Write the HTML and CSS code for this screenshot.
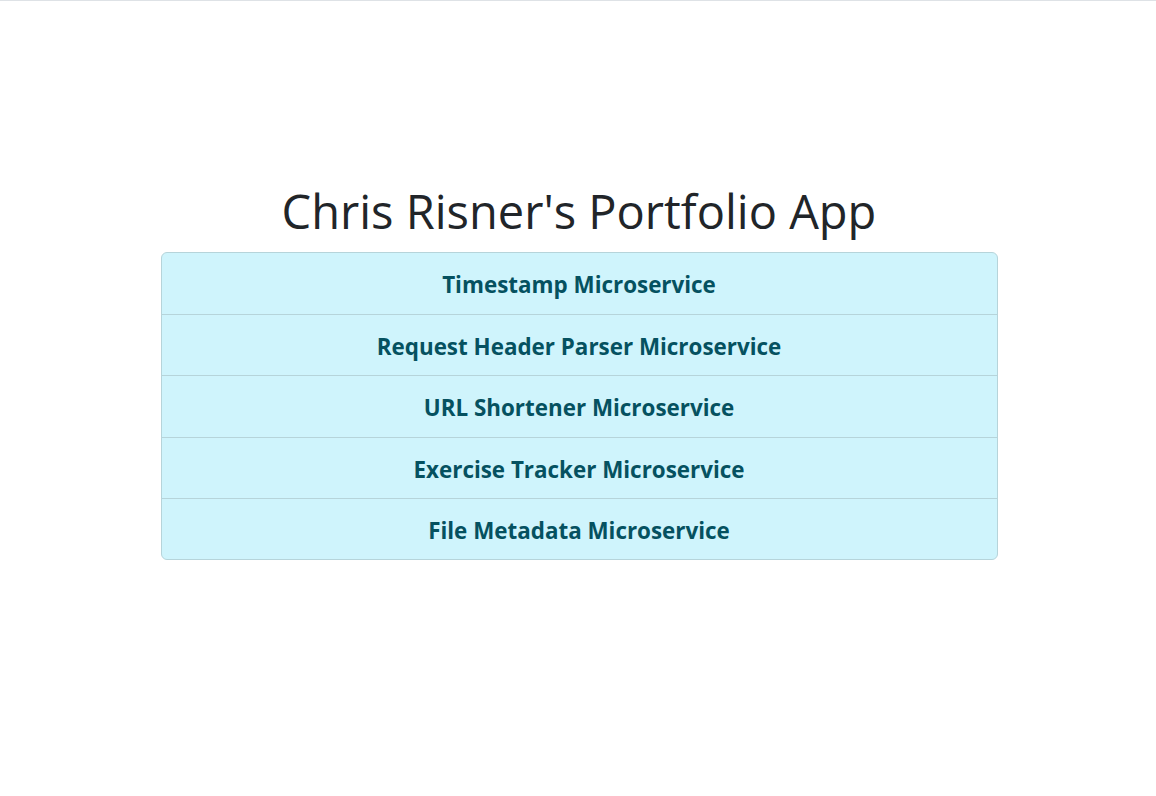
FILE: index.html
```html
<!DOCTYPE html>
<html lang="en">
<head>
<meta charset="utf-8">
<title>Chris Risner's Portfolio App</title>
<link rel="stylesheet" href="styles.css">
</head>
<body>
<main class="page">
  <h1 class="title">Chris Risner's Portfolio App</h1>
  <ul class="list">
    <li class="item"><a class="link" href="#">Timestamp Microservice</a></li>
    <li class="item"><a class="link" href="#">Request Header Parser Microservice</a></li>
    <li class="item"><a class="link" href="#">URL Shortener Microservice</a></li>
    <li class="item"><a class="link" href="#">Exercise Tracker Microservice</a></li>
    <li class="item"><a class="link" href="#">File Metadata Microservice</a></li>
  </ul>
</main>
</body>
</html>
```
FILE: styles.css
```css
html, body {
  margin: 0;
  padding: 0;
  background: #fff;
}
body {
  border-top: 1px solid #dee2e6;
  font-family: "Open Sans", "Noto Sans", sans-serif;
  color: #212529;
}
.page {
  display: flex;
  flex-direction: column;
  align-items: center;
  padding-top: 182px;
  padding-left: 2px;
}
.title {
  margin: 0 0 13px;
  font-size: 47px;
  font-weight: 400;
  line-height: 1.2;
  text-align: center;
}
.list {
  list-style: none;
  margin: 0;
  padding: 0;
  width: 837px;
  box-sizing: border-box;
  border: 1px solid #b6d4da;
  border-radius: 6px;
  background: #cff4fc;
  overflow: hidden;
}
.item {
  height: 61.5px;
  box-sizing: border-box;
  padding-top: 2px;
  display: flex;
  align-items: center;
  justify-content: center;
  border-top: 1px solid #b6d4da;
}
.item:first-child {
  border-top: 0;
  height: 60.5px;
}
.item:last-child {
  height: 61px;
}
.link {
  color: #055160;
  font-weight: 700;
  font-size: 22.4px;
  text-decoration: none;
}
```
